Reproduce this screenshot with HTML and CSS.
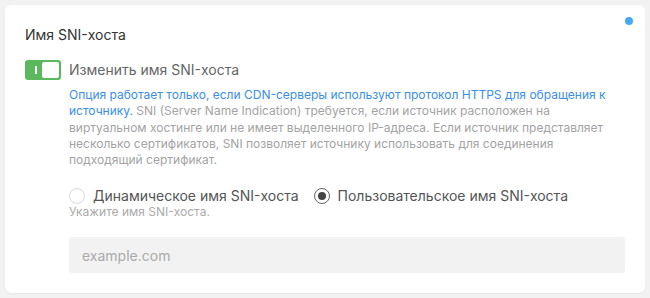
FILE: index.html
```html
<!DOCTYPE html>
<html lang="ru">
<head>
    <meta charset="UTF-8">
    <meta name="viewport" content="width=device-width, initial-scale=1.0">
    <title>Имя SNI-хоста</title>
    <link rel="stylesheet" href="styles.css">
</head>
<body>
    <div class="card">
        <span class="dot"></span>
        <h2 class="card-title">Имя SNI-хоста</h2>

        <div class="switch-row">
            <span class="switch on"><span class="switch-mark"></span><span class="switch-knob"></span></span>
            <div class="switch-body">
                <div class="switch-label">Изменить имя SNI-хоста</div>
                <p class="desc"><span class="desc-link">Опция работает только, если CDN-серверы используют протокол HTTPS для обращения к источнику.</span> SNI (Server Name Indication) требуется, если источник расположен на виртуальном хостинге или не имеет выделенного IP-адреса. Если источник представляет несколько сертификатов, SNI позволяет источнику использовать для соединения подходящий сертификат.</p>

                <div class="radio-group">
                    <label class="radio"><span class="radio-dot"></span>Динамическое имя SNI-хоста</label>
                    <label class="radio checked"><span class="radio-dot"></span>Пользовательское имя SNI-хоста</label>
                </div>
                <div class="hint">Укажите имя SNI-хоста.</div>
                <input class="text-input" type="text" placeholder="example.com">
            </div>
        </div>
    </div>
</body>
</html>
```

FILE: styles.css
```css
body {
    margin: 0;
    padding: 5px;
    background-color: #f2f2f2;
    font-family: Inter, "Noto Sans", sans-serif;
    color: #333;
}
.card {
    position: relative;
    background-color: #fff;
    border-radius: 6px;
    box-shadow: 0 1px 2px rgba(0, 0, 0, 0.05);
    padding: 20px;
    height: 248px;
}
.dot {
    position: absolute;
    top: 12px;
    right: 12px;
    width: 8px;
    height: 8px;
    border-radius: 50%;
    background-color: #45a8f2;
}
.card-title {
    margin: 0;
    font-size: 14px;
    font-weight: 400;
    line-height: 20px;
    color: #333;
}
.switch-row {
    display: flex;
    gap: 8px;
    margin-top: 15px;
}
.switch {
    position: relative;
    flex: none;
    width: 36px;
    height: 20px;
    border-radius: 3px;
    background-color: #5cb85c;
}
.switch-mark {
    position: absolute;
    left: 10px;
    top: 6px;
    width: 2px;
    height: 8px;
    background-color: #fff;
}
.switch-knob {
    position: absolute;
    right: 2px;
    top: 2px;
    width: 17px;
    height: 16px;
    border-radius: 2px;
    background-color: #fff;
}
.switch-body {
    flex: 1;
}
.switch-label {
    font-size: 14px;
    line-height: 20px;
    color: #666;
}
.desc {
    margin: 7px 0 0;
    padding-right: 12px;
    font-size: 12px;
    line-height: 16.25px;
    color: #a3a3a3;
}
.desc-link {
    color: #3a8ee6;
}
.radio-group {
    display: flex;
    gap: 15px;
    margin-top: 20px;
}
.radio {
    display: flex;
    align-items: center;
    gap: 8px;
    font-size: 14px;
    line-height: 16px;
    color: #555;
}
.radio-dot {
    position: relative;
    box-sizing: border-box;
    width: 16px;
    height: 16px;
    border: 1px solid #d9d9d9;
    border-radius: 50%;
}
.radio.checked .radio-dot {
    border-color: #666;
}
.radio.checked .radio-dot::after {
    content: "";
    position: absolute;
    left: 3px;
    top: 3px;
    width: 8px;
    height: 8px;
    border-radius: 50%;
    background-color: #444;
}
.hint {
    font-size: 12px;
    line-height: 16px;
    color: #aaa;
}
.text-input {
    display: block;
    box-sizing: border-box;
    width: 100%;
    height: 36px;
    margin-top: 17px;
    padding: 0 13px;
    border: none;
    border-radius: 3px;
    background-color: #f2f2f2;
    font-family: Inter, "Noto Sans", sans-serif;
    font-size: 14px;
    color: #333;
}
.text-input::placeholder {
    color: #aaa;
}
```
